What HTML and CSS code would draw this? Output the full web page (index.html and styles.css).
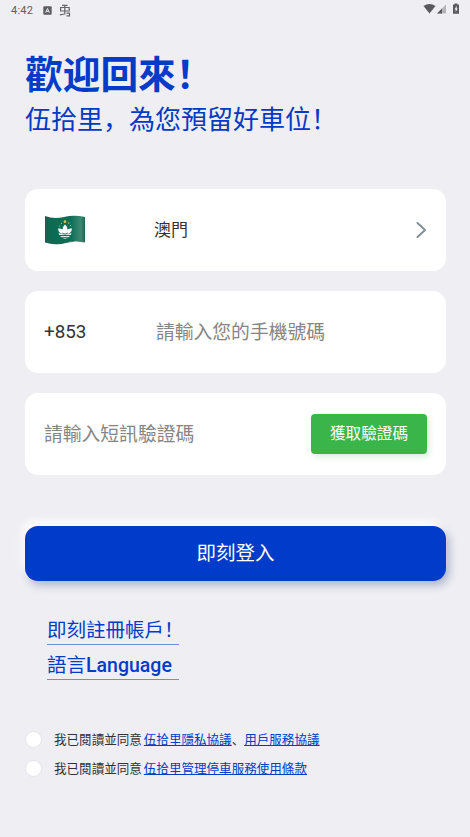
FILE: index.html
```html
<!DOCTYPE html>
<html lang="zh-CN">
<head>
<meta charset="utf-8">
<title>歡迎回來</title>
<link rel="stylesheet" href="styles.css">
</head>
<body>
<header class="status">
  <span class="time">4:42</span>
  <svg class="badge" width="9" height="9" viewBox="0 0 9 9"><rect x=".3" y=".3" width="8.4" height="8.4" rx="1" fill="#5e5e62"/><path d="M2.7 6.6 4.5 2.5 6.3 6.6M3.3 5.4H5.7" fill="none" stroke="#eeeef2" stroke-width="1"/></svg>
  <svg class="bug" width="12" height="13" viewBox="0 0 12 13" fill="none" stroke="#66666a" stroke-width="1.2"><path d="M3 1.300H8.500M1.600 3.500H10.200V7H1.600ZM5.800 1V10.500M.8 10.800 5.800 10M7.500 9.200H10.500V11.800H7.500"/></svg>
  <svg class="signals" width="38" height="12" viewBox="0 0 38 12"><path d="M.5 3Q6.500-1 12.500 3L6.500 10.500Z" fill="#5a5a5e"/><path d="M14 10.500 23 1.500V10.500Z" fill="#b5b5b9"/><path d="M14 10.500 19 5.500V10.500Z" fill="#5a5a5e"/><path d="M31.500 1.500V.5H34.300V1.500H36V10.700H30V1.500Z" fill="#5a5a5e"/><path d="M33.700 2.700 31.500 6.400H32.700V9.300L34.700 5.600H33.700Z" fill="#eeeef2"/></svg>
</header>
<main>
  <h1>歡迎回來！</h1>
  <p class="subtitle">伍拾里，為您預留好車位！</p>
  <section class="card">
    <svg class="flag" width="42" height="30" viewBox="0 0 42 30">
      <defs><linearGradient id="cloth"><stop offset="0" stop-color="#16634e"/><stop offset=".3" stop-color="#086f54"/><stop offset=".65" stop-color="#106e56"/><stop offset=".9" stop-color="#3d8873"/><stop offset="1" stop-color="#24614f"/></linearGradient></defs>
      <path d="M1 1Q10 4.500 20 2T41 2V27Q31 24.500 22 27.500T1 27Z" fill="url(#cloth)"/>
      <path d="M1 27Q12 30.500 22 27.500T41 27" fill="none" stroke="#174f40" stroke-width=".8"/>
      <path d="M21 9.500Q24 12 23.300 14.500Q26 13 28 13.500Q27.500 18 23.500 19H18.500Q14.500 18 14 13.500Q16.500 13 18.700 14.500Q18 12 21 9.500Z" fill="#fff"/>
      <path d="M14.500 18Q21 20.500 27.500 18L26.800 20H15.200ZM16 21H26L24.500 22.300H17.500ZM18.500 23H23.500L21 23.800Z" fill="#d5e8e1"/>
      <path d="M18 18Q21 20 24 18" fill="none" stroke="#42675b" stroke-width=".8"/>
      <g fill="#e4bd36"><circle cx="21" cy="6.700" r="1.400"/><circle cx="17.500" cy="8.500" r=".6"/><circle cx="24.800" cy="8" r=".7"/><circle cx="15.500" cy="11" r=".6"/><circle cx="26.500" cy="10.500" r=".6"/></g>
    </svg>
    <span class="region">澳門</span>
    <svg class="chevron" width="12" height="18" viewBox="0 0 12 18"><path d="M2.500 2 10 9 2.500 16" fill="none" stroke="#839196" stroke-width="2" stroke-linecap="round" stroke-linejoin="round"/></svg>
  </section>
  <section class="card">
    <span class="code">+853</span>
    <span class="hint">請輸入您的手機號碼</span>
  </section>
  <section class="card">
    <span class="hint">請輸入短訊驗證碼</span>
    <button class="send">獲取驗證碼</button>
  </section>
  <button class="login">即刻登入</button>
  <nav class="links">
    <a>即刻註冊帳戶！</a>
    <a>語言<b>Language</b></a>
  </nav>
  <div class="agree"><i class="radio"></i><span>我已閱讀並同意</span><u>伍拾里隱私協議</u><span class="sep">、</span><u>用戶服務協議</u></div>
  <div class="agree"><i class="radio"></i><span>我已閱讀並同意</span><u>伍拾里管理停車服務使用條款</u></div>
</main>
</body>
</html>
```
FILE: styles.css
```css
* { box-sizing: border-box; }
body {
  margin: 0;
  height: 837px;
  overflow: hidden;
  background: #eeeef3;
  color: #333;
  font-family: Roboto, "Noto Sans CJK SC", sans-serif;
  white-space: nowrap;
}
svg { display: block; flex: none; }
button { border: 0; padding: 0; color: #fff; font-family: inherit; }
.status { display: flex; align-items: center; height: 20px; padding: 0 9px 0 11px; color: #5e5e62; }
.time { width: 32px; font-size: 11px; letter-spacing: .2px; }
.bug { margin-left: 7px; }
.signals { margin: -2px 0 0 auto; }
main { padding: 30px 24px 0 25px; }
h1 { margin: 0; height: 50px; line-height: 50px; font-size: 37.7px; font-weight: 700; color: #003bc9; }
.subtitle { margin: 0 0 50px; height: 39px; line-height: 41px; font-size: 26px; color: #0039c5; }
.card {
  display: flex;
  align-items: center;
  height: 82.4px;
  margin-bottom: 19.6px;
  padding: 0 19px;
  border-radius: 13px;
  background: #fff;
}
.region { margin: 0 0 4px 68px; font-size: 17px; }
.chevron { margin-left: auto; }
.code { width: 112px; margin-bottom: 1px; font-size: 18.8px; }
.hint { margin-bottom: 4px; font-size: 18.8px; color: #858585; }
.send {
  width: 116px;
  height: 40px;
  margin-left: auto;
  padding-bottom: 4px;
  border-radius: 4px;
  background: #39b54a;
  box-shadow: 2px 3px 6px rgba(57, 181, 74, .2);
  font-size: 15.6px;
}
.login {
  display: block;
  width: 100%;
  height: 55px;
  margin-top: 51px;
  padding-bottom: 5px;
  border-radius: 13px;
  background: #003bc9;
  box-shadow: -4px -6px 8px #fcfcfd, 3px 4px 8px rgba(60, 80, 130, .38);
  font-size: 19.5px;
}
.links { display: flex; flex-direction: column; width: 132px; margin: 29px 0 45px 22px; }
.links a { height: 35px; border-bottom: 1px solid #718ed3; line-height: 41px; font-size: 19.5px; color: #003bc9; }
.links b { font-weight: 500; }
.agree { display: flex; align-items: center; height: 29px; font-size: 12.55px; }
.agree span, .agree u { margin-bottom: 2px; }
.radio { width: 17px; height: 17px; margin-right: 12px; border: 1px solid #e5e5e9; border-radius: 50%; background: #fff; }
.agree span + u { margin-left: 2px; }
.agree .sep + u { margin-left: 0; }
.agree u { color: #003bc9; }
```
